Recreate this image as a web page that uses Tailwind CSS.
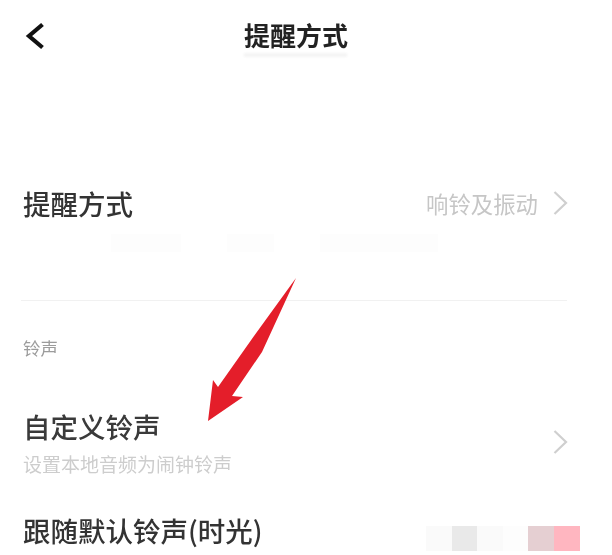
<!DOCTYPE html>
<html lang="zh">
<head>
<meta charset="utf-8">
<script src="https://cdn.jsdelivr.net/npm/@tailwindcss/browser@4"></script>
</head>
<body class="m-0 bg-white">
<main class="relative w-[612px] h-[555px] overflow-hidden bg-white font-['Noto_Sans_CJK_SC','Noto_Sans',sans-serif]">
  <header class="relative flex items-center justify-center h-[72px] pl-[0px] pr-[20px]">
    <svg class="absolute left-[24px] top-[21px] w-[24px] h-[30px] blur-[0.5px]" viewBox="0 0 24 30" fill="none" stroke="#111" stroke-width="4.2"><path d="M18.5 3.5 L5 15 L18.5 26.5"/></svg>
    <h1 class="text-[26px] leading-[36px] -mt-[2px] font-bold text-[#222] blur-[0.5px]">提醒方式</h1>
    <div class="absolute left-[244px] top-[53px] w-[103px] h-[4px] bg-[#f4f4f4] blur-[1px]" aria-hidden="true"></div>
  </header>

  <section class="px-[23px] pt-[101px]">
    <div class="flex items-center justify-between h-[60px]">
      <span class="text-[27.5px] leading-[36px] font-medium text-[#333] blur-[0.5px]">提醒方式</span>
      <span class="flex items-center gap-[15px] pr-[21px]">
        <span class="text-[22.4px] leading-[30px] text-[#c6c6c6] blur-[0.5px]">响铃及振动</span>
        <svg class="w-[15px] h-[26px] blur-[0.4px]" viewBox="0 0 15 26" fill="none" stroke="#cfcfcf" stroke-width="2.2"><path d="M1.5 2 L13 13 L1.5 24"/></svg>
      </span>
    </div>
    <div class="flex h-[20px] pl-[88px] gap-[46px] items-center" aria-hidden="true">
      <div class="w-[70px] h-[18px] bg-[#fdfdfd]"></div>
      <div class="w-[47px] h-[18px] bg-[#fdfdfd]"></div>
      <div class="w-[118px] h-[18px] bg-[#fdfdfd]"></div>
    </div>
  </section>

  <div class="mt-[47px] ml-[21px] w-[546px] h-[1px] bg-[#f1f1f1]"></div>

  <section class="px-[23px] pt-[27px]">
    <h2 class="h-[40px] text-[17.5px] leading-[40px] font-normal text-[#9c9c9c] blur-[0.4px]">铃声</h2>
    <div class="relative h-[105px] pt-[38px]">
      <p class="h-[40px] text-[27.5px] leading-[40px] font-medium text-[#3a3a3a] blur-[0.5px]">自定义铃声</p>
      <p class="mt-[5px] h-[26px] text-[19px] leading-[26px] text-[#cdcdcd] blur-[0.5px]">设置本地音频为闹钟铃声</p>
      <svg class="absolute right-[21px] top-[61px] w-[15px] h-[26px] blur-[0.4px]" viewBox="0 0 15 26" fill="none" stroke="#cfcfcf" stroke-width="2.2"><path d="M1.5 2 L13 13 L1.5 24"/></svg>
    </div>
    <div class="flex items-center h-[40px] mt-[37px]">
      <span class="text-[27.5px] leading-[40px] font-medium text-[#333] blur-[0.5px]">跟随默认铃声(时光)</span>
    </div>
  </section>

  <div class="absolute left-[426px] top-[526px] flex" aria-hidden="true">
    <div class="w-[25.6px] h-[25px] bg-[#fafafa]"></div>
    <div class="w-[25.6px] h-[25px] bg-[#e9e9e9]"></div>
    <div class="w-[25.6px] h-[25px] bg-[#fafafa]"></div>
    <div class="w-[25.6px] h-[25px] bg-[#fdfdfd]"></div>
    <div class="w-[25.6px] h-[25px] bg-[#e5cfd2]"></div>
    <div class="w-[25.6px] h-[25px] bg-[#ffb6c0]"></div>
  </div>

  <svg class="absolute left-[200px] top-[270px] w-[100px] h-[160px] blur-[0.4px]" viewBox="0 0 100 160" aria-hidden="true">
    <polygon points="96,8 54,66 18,117 13,110 8,151 43,127 32,126 62,82" fill="#e41e2a"/>
  </svg>
</main>
</body>
</html>
